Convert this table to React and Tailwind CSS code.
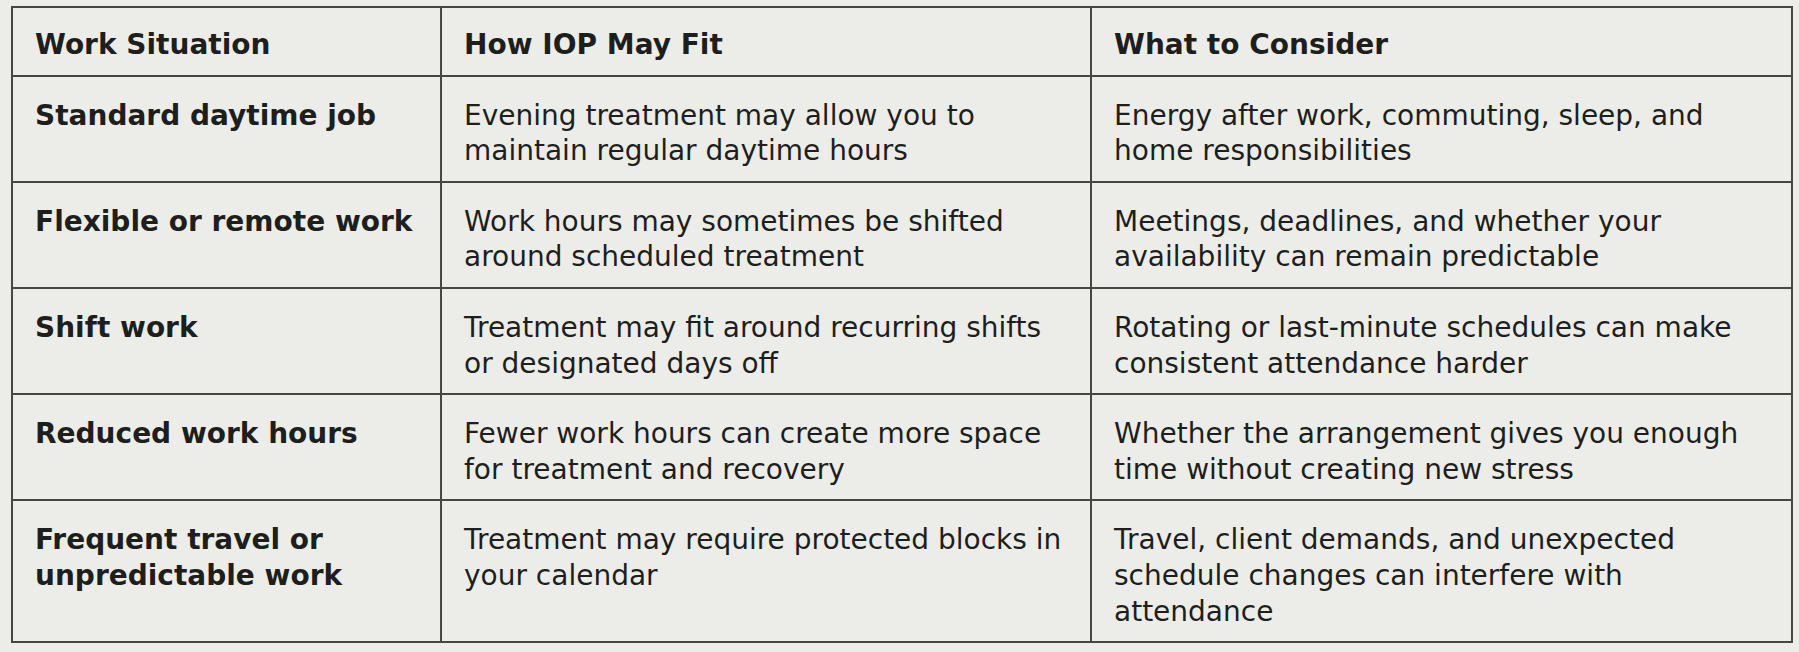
import React from "react";

const rows = [
  {
    situation: "Standard daytime job",
    fit: "Evening treatment may allow you to maintain regular daytime hours",
    consider: "Energy after work, commuting, sleep, and home responsibilities",
  },
  {
    situation: "Flexible or remote work",
    fit: "Work hours may sometimes be shifted around scheduled treatment",
    consider: "Meetings, deadlines, and whether your availability can remain predictable",
  },
  {
    situation: "Shift work",
    fit: "Treatment may fit around recurring shifts or designated days off",
    consider: "Rotating or last-minute schedules can make consistent attendance harder",
  },
  {
    situation: "Reduced work hours",
    fit: "Fewer work hours can create more space for treatment and recovery",
    consider: "Whether the arrangement gives you enough time without creating new stress",
  },
  {
    situation: "Frequent travel or unpredictable work",
    fit: "Treatment may require protected blocks in your calendar",
    consider: "Travel, client demands, and unexpected schedule changes can interfere with attendance",
  },
];

const cell = "border-2 border-[#464743] px-[22px] align-top text-left";
const headCell = `${cell} pt-[19px] pb-[12px] font-bold`;
const bodyCell = `${cell} pt-[21px] pb-[12px]`;

export default function App() {
  return (
    <div
      className="min-h-screen bg-[#ecede9] pl-[11px] pt-[6px] text-[#1e1f1c] text-[28px] leading-[35.6px]"
      style={{ fontFamily: '"DejaVu Sans", Verdana, sans-serif' }}
    >
      <table className="table-fixed border-collapse w-[1780px]">
        <colgroup>
          <col className="w-[429px]" />
          <col className="w-[650px]" />
          <col className="w-[701px]" />
        </colgroup>
        <thead>
          <tr>
            <th className={headCell}>Work Situation</th>
            <th className={headCell}>How IOP May Fit</th>
            <th className={headCell}>What to Consider</th>
          </tr>
        </thead>
        <tbody>
          {rows.map((r) => (
            <tr key={r.situation}>
              <td className={`${bodyCell} font-bold`}>{r.situation}</td>
              <td className={bodyCell}>{r.fit}</td>
              <td className={bodyCell}>{r.consider}</td>
            </tr>
          ))}
        </tbody>
      </table>
    </div>
  );
}
